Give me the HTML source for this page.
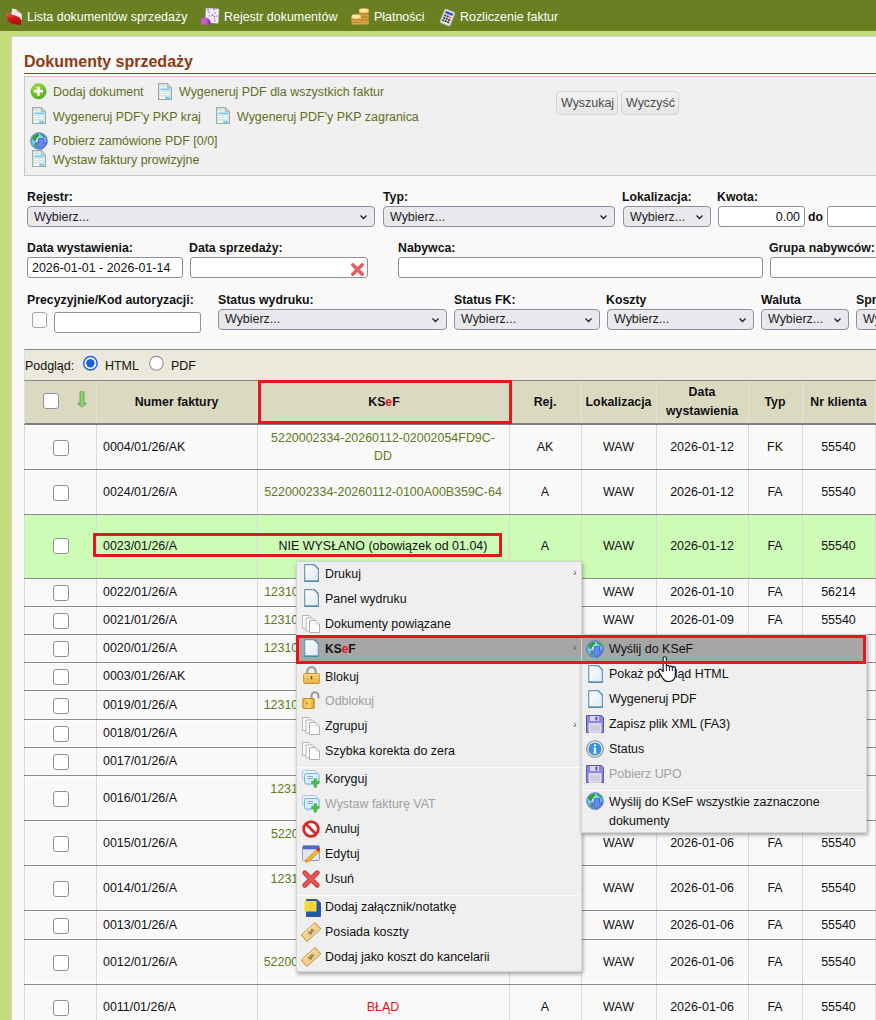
<!DOCTYPE html>
<html><head><meta charset="utf-8">
<style>
*{box-sizing:border-box;margin:0;padding:0}
html,body{width:876px;height:1020px;overflow:hidden;background:#c5dd79;font-family:"Liberation Sans",sans-serif;font-size:12.45px;color:#111}
.a{position:absolute;white-space:nowrap}
#nav{position:absolute;left:0;top:0;width:876px;height:31px;background:#6a7f22}
#nav .t{position:absolute;top:9px;color:#fff;font-size:12.45px;line-height:16px}
#panel{position:absolute;left:11px;top:36px;width:900px;height:1000px;background:#f9f9f9;border-top:1px solid #d4d2e2;border-left:1px solid #d0d0e0}
#title{position:absolute;left:24px;top:52px;font-size:16px;font-weight:bold;color:#8e3a14;line-height:20px}
#tline{position:absolute;left:24px;top:72px;width:860px;height:3px;background:#9a4020;border-top:1px solid #fff;border-bottom:1px solid #fff}
#tool{position:absolute;left:24px;top:76px;width:870px;height:100px;background:#f0f0f0;border:1px solid #c9c9c9}
.lnk{color:#5f6f1d}
.lbl{position:absolute;font-weight:bold;font-size:12.3px;line-height:14px;color:#111;white-space:nowrap}
.sel{position:absolute;height:21px;background:#e9e9ed;border:1px solid #8f8f9d;border-radius:4px;font-size:12.45px;line-height:20px;padding-left:6px;color:#1b1b1b;white-space:nowrap}
.sel .chev{position:absolute;right:7px;top:8px;width:7px;height:5px}
.inp{position:absolute;height:21px;background:#fff;border:1px solid #8f8f9d;border-radius:3px;font-size:12.45px;line-height:20px;padding-left:4px;color:#111;white-space:nowrap}
.btn{position:absolute;height:24px;background:linear-gradient(#f2f2f2,#e6e6e6);border:1px solid #d4d4d4;border-radius:4px;font-size:12.45px;line-height:22px;padding:0 0 0 4px;color:#4a4a4a}
#pod{position:absolute;left:24px;top:349px;width:860px;height:32px;background:#ebe9db;border-top:1px solid #8a8a88;border-left:1px solid #dcdcd4;border-bottom:1px solid #f4f2e6}
#thead{position:absolute;left:24px;top:380px;width:860px;height:45px;background:#dcd9c1;border-top:1px solid #8a8a88;border-bottom:2px solid #7e7e7e;border-left:1px solid #e4e4dc}
.th{position:absolute;font-weight:bold;font-size:12.35px;line-height:19px;text-align:center;color:#111}
.row{position:absolute;left:24px;width:860px;background:#f9f9f9;border-bottom:2px solid #979797}
.vl{position:absolute;width:1px;background:#dadada}
.td{position:absolute;text-align:center;font-size:12.45px;line-height:18px;color:#111;white-space:nowrap}
.ks{color:#5f7a1c}
.cb{position:absolute;width:16px;height:16px;background:#fff;border:1px solid #8f8f9d;border-radius:3px}
#menu{position:absolute;left:296px;top:561px;width:286px;height:410px;background:#efefef;border:1px solid #cfcfcf;box-shadow:2px 3px 5px rgba(0,0,0,.35)}
#sub{position:absolute;left:581px;top:634px;width:286px;height:199px;background:#efefef;border:1px solid #cfcfcf;box-shadow:2px 3px 5px rgba(0,0,0,.35)}
.mi{position:absolute;left:0;font-size:12.45px;line-height:16px;color:#111;white-space:nowrap}
.dis{color:#a0a0a0}
.sep{position:absolute;left:2px;right:2px;height:1px;background:#d6d6d6;border-bottom:1px solid #fafafa}
.red{position:absolute;border:3px solid #e8141e}
svg{position:absolute;overflow:visible}
</style></head><body>
<div id="nav">
 <div class="t" style="left:27px">Lista dokumentów sprzedaży</div>
 <div class="t" style="left:224px">Rejestr dokumentów</div>
 <div class="t" style="left:374px">Płatności</div>
 <div class="t" style="left:460px">Rozliczenie faktur</div>
</div>
<div id="panel"></div>
<div id="title">Dokumenty sprzedaży</div>
<div id="tline"></div>
<div id="tool"></div>
<div class="a lnk" style="left:53px;top:85px">Dodaj dokument</div>
<div class="a lnk" style="left:179px;top:85px">Wygeneruj PDF dla wszystkich faktur</div>
<div class="a lnk" style="left:53px;top:110px">Wygeneruj PDF'y PKP kraj</div>
<div class="a lnk" style="left:237px;top:110px">Wygeneruj PDF'y PKP zagranica</div>
<div class="a lnk" style="left:53px;top:134px">Pobierz zamówione PDF [0/0]</div>
<div class="a lnk" style="left:53px;top:153px">Wystaw faktury prowizyjne</div>
<div class="btn" style="left:556px;top:91px;width:62px">Wyszukaj</div>
<div class="btn" style="left:621px;top:91px;width:58px">Wyczyść</div>

<!-- filters -->
<div class="lbl" style="left:27px;top:190px">Rejestr:</div>
<div class="sel" style="left:27px;top:206px;width:348px">Wybierz...<svg class="chev" viewBox="0 0 7 5"><path d="M0.5 0.5L3.5 3.5L6.5 0.5" fill="none" stroke="#222" stroke-width="1.3"/></svg></div>
<div class="lbl" style="left:383px;top:190px">Typ:</div>
<div class="sel" style="left:383px;top:206px;width:232px">Wybierz...<svg class="chev" viewBox="0 0 7 5"><path d="M0.5 0.5L3.5 3.5L6.5 0.5" fill="none" stroke="#222" stroke-width="1.3"/></svg></div>
<div class="lbl" style="left:622px;top:190px">Lokalizacja:</div>
<div class="sel" style="left:623px;top:206px;width:88px">Wybierz...<svg class="chev" viewBox="0 0 7 5"><path d="M0.5 0.5L3.5 3.5L6.5 0.5" fill="none" stroke="#222" stroke-width="1.3"/></svg></div>
<div class="lbl" style="left:717px;top:190px">Kwota:</div>
<div class="inp" style="left:718px;top:206px;width:87px;text-align:right;padding-right:4px">0.00</div>
<div class="lbl" style="left:808px;top:210px">do</div>
<div class="inp" style="left:827px;top:206px;width:80px"></div>

<div class="lbl" style="left:27px;top:241px">Data wystawienia:</div>
<div class="inp" style="left:27px;top:257px;width:156px">2026-01-01 - 2026-01-14</div>
<div class="lbl" style="left:189px;top:241px">Data sprzedaży:</div>
<div class="inp" style="left:190px;top:257px;width:178px"></div>
<div class="lbl" style="left:398px;top:241px">Nabywca:</div>
<div class="inp" style="left:398px;top:257px;width:365px"></div>
<div class="lbl" style="left:769px;top:241px">Grupa nabywców:</div>
<div class="inp" style="left:770px;top:257px;width:120px"></div>

<div class="lbl" style="left:27px;top:293px">Precyzyjnie/Kod autoryzacji:</div>
<div class="cb" style="left:32px;top:312px;width:15px;height:16px;border-radius:3px;border-color:#a4a4b0"></div>
<div class="inp" style="left:54px;top:312px;width:147px"></div>
<div class="lbl" style="left:218px;top:293px">Status wydruku:</div>
<div class="sel" style="left:218px;top:309px;width:229px;line-height:19px">Wybierz...<svg class="chev" viewBox="0 0 7 5"><path d="M0.5 0.5L3.5 3.5L6.5 0.5" fill="none" stroke="#222" stroke-width="1.3"/></svg></div>
<div class="lbl" style="left:454px;top:293px">Status FK:</div>
<div class="sel" style="left:454px;top:309px;width:146px;line-height:19px">Wybierz...<svg class="chev" viewBox="0 0 7 5"><path d="M0.5 0.5L3.5 3.5L6.5 0.5" fill="none" stroke="#222" stroke-width="1.3"/></svg></div>
<div class="lbl" style="left:606px;top:293px">Koszty</div>
<div class="sel" style="left:607px;top:309px;width:147px;line-height:19px">Wybierz...<svg class="chev" viewBox="0 0 7 5"><path d="M0.5 0.5L3.5 3.5L6.5 0.5" fill="none" stroke="#222" stroke-width="1.3"/></svg></div>
<div class="lbl" style="left:761px;top:293px">Waluta</div>
<div class="sel" style="left:761px;top:309px;width:88px;line-height:19px">Wybierz...<svg class="chev" viewBox="0 0 7 5"><path d="M0.5 0.5L3.5 3.5L6.5 0.5" fill="none" stroke="#222" stroke-width="1.3"/></svg></div>
<div class="lbl" style="left:856px;top:293px">Spr</div>
<div class="sel" style="left:856px;top:309px;width:60px;line-height:19px">Wy</div>

<svg style="left:6px;top:8px" width="17" height="18" viewBox="0 0 17 18"><path d="M6.2 0.5L10 1.2L15.8 6L16 13.5L9 10L5.2 6Z" fill="#ece6e8"/><path d="M10 2.5L14 5.5" stroke="#d8a8b0" stroke-width="0.8"/><defs><linearGradient id="fd" x1="0" y1="0" x2="0.3" y2="1"><stop offset="0" stop-color="#f06868"/><stop offset="0.5" stop-color="#d01818"/><stop offset="1" stop-color="#b01010"/></linearGradient></defs><path d="M0.1 4.8L9 7.6L12.8 9L15.9 12.4L14.2 17.2L4.5 15.2L1.5 12.5Z" fill="url(#fd)"/></svg>
<svg style="left:201px;top:7px" width="18" height="18" viewBox="0 0 18 18"><path d="M5 1L18 2L17.2 16.3L4.2 15.5Z" fill="#f0f0f6" stroke="#d0c8e0" stroke-width="0.4"/><g fill="#c050d0"><circle cx="7" cy="2.5" r="0.9"/><circle cx="13" cy="2.5" r="0.8"/><circle cx="8" cy="5" r="0.8"/><circle cx="14" cy="6" r="0.8"/><circle cx="11.5" cy="8" r="0.9"/><circle cx="8.5" cy="9" r="0.8"/><circle cx="13.5" cy="9.5" r="0.8"/><circle cx="16" cy="9" r="0.7"/><circle cx="13.5" cy="12" r="0.8"/><circle cx="14" cy="14" r="0.7"/></g><path d="M0 12.5L3.5 10L7.5 11.5L9.5 14V17.5H0Z" fill="#c85acc"/><path d="M6.5 11.5L9.5 14V17.5H6.5Z" fill="#9a38a8"/></svg>
<svg style="left:351px;top:8px" width="18" height="17" viewBox="0 0 18 17"><rect x="8" y="0.5" width="9.8" height="16" rx="1.5" fill="#d8a040"/><ellipse cx="12.9" cy="2.5" rx="4.8" ry="2" fill="#fbe6a0"/><path d="M8.2 6H17.7M8.2 9H17.7M8.2 12H17.7" stroke="#a87020" stroke-width="0.8"/><rect x="0.5" y="6.5" width="9.5" height="10" rx="1.5" fill="#e0aa48"/><ellipse cx="5.2" cy="8.5" rx="4.6" ry="2" fill="#fbe6a0"/><path d="M0.7 12H9.8M0.7 14.5H9.8" stroke="#a87020" stroke-width="0.8"/></svg>
<svg style="left:439px;top:9px" width="17" height="17" viewBox="0 0 17 17"><g transform="rotate(22 8.5 8.5)"><rect x="3.2" y="1.2" width="10.6" height="14.6" rx="1.2" fill="#e6e6e6" stroke="#bdbdbd" stroke-width="0.8"/><rect x="4.6" y="2.8" width="7.8" height="2.6" fill="#3a5eb8"/><g fill="#3c3c3c"><rect x="4.6" y="6.6" width="2" height="1.8"/><rect x="7.3" y="6.6" width="2" height="1.8"/><rect x="4.6" y="9.2" width="2" height="1.8"/><rect x="7.3" y="9.2" width="2" height="1.8"/><rect x="10" y="9.2" width="2" height="1.8"/><rect x="4.6" y="11.8" width="2" height="1.8"/><rect x="7.3" y="11.8" width="2" height="1.8"/><rect x="10" y="11.8" width="2" height="1.8"/></g><rect x="10" y="6.6" width="2.2" height="1.8" fill="#f07a7a"/></g></svg>
<svg style="left:30px;top:83px" width="17" height="17" viewBox="0 0 17 17"><defs><radialGradient id="gp" cx="0.4" cy="0.3" r="0.75"><stop offset="0" stop-color="#a8e050"/><stop offset="1" stop-color="#4aa820"/></radialGradient></defs><circle cx="8.5" cy="8.3" r="8" fill="url(#gp)"/><path d="M8.5 3.8V12.8M4 8.3H13" stroke="#fff" stroke-width="2.4"/></svg>
<svg style="left:158px;top:83px" width="14" height="17" viewBox="0 0 14 17"><path d="M0.6 0.6H9.3L13.4 4.7V16.4H0.6Z" fill="#e9f0f0" stroke="#9aabab" stroke-width="1.2"/><path d="M9.3 0.6V4.7H13.4" fill="#c9d5d5" stroke="#9aabab" stroke-width="0.8"/><path d="M3 3.2H7" stroke="#b8c8c8" stroke-width="0.7"/><rect x="2.5" y="5.6" width="9.5" height="1.6" fill="#6ccbf2"/><rect x="2.8" y="7.6" width="4" height="6" fill="#d8e4e4"/><rect x="7.3" y="7.6" width="4.4" height="6" fill="#d8e4e4"/><path d="M3.3 9.5H6.3M7.8 9.5H11M3.3 11.5H6.3M7.8 11.5H11" stroke="#fff" stroke-width="0.9"/><rect x="2" y="14" width="5" height="1.8" fill="#fff"/><rect x="7.3" y="13.8" width="4.6" height="2" fill="#6ccbf2"/></svg>
<svg style="left:32px;top:107px" width="14" height="17" viewBox="0 0 14 17"><path d="M0.6 0.6H9.3L13.4 4.7V16.4H0.6Z" fill="#e9f0f0" stroke="#9aabab" stroke-width="1.2"/><path d="M9.3 0.6V4.7H13.4" fill="#c9d5d5" stroke="#9aabab" stroke-width="0.8"/><path d="M3 3.2H7" stroke="#b8c8c8" stroke-width="0.7"/><rect x="2.5" y="5.6" width="9.5" height="1.6" fill="#6ccbf2"/><rect x="2.8" y="7.6" width="4" height="6" fill="#d8e4e4"/><rect x="7.3" y="7.6" width="4.4" height="6" fill="#d8e4e4"/><path d="M3.3 9.5H6.3M7.8 9.5H11M3.3 11.5H6.3M7.8 11.5H11" stroke="#fff" stroke-width="0.9"/><rect x="2" y="14" width="5" height="1.8" fill="#fff"/><rect x="7.3" y="13.8" width="4.6" height="2" fill="#6ccbf2"/></svg>
<svg style="left:216px;top:107px" width="14" height="17" viewBox="0 0 14 17"><path d="M0.6 0.6H9.3L13.4 4.7V16.4H0.6Z" fill="#e9f0f0" stroke="#9aabab" stroke-width="1.2"/><path d="M9.3 0.6V4.7H13.4" fill="#c9d5d5" stroke="#9aabab" stroke-width="0.8"/><path d="M3 3.2H7" stroke="#b8c8c8" stroke-width="0.7"/><rect x="2.5" y="5.6" width="9.5" height="1.6" fill="#6ccbf2"/><rect x="2.8" y="7.6" width="4" height="6" fill="#d8e4e4"/><rect x="7.3" y="7.6" width="4.4" height="6" fill="#d8e4e4"/><path d="M3.3 9.5H6.3M7.8 9.5H11M3.3 11.5H6.3M7.8 11.5H11" stroke="#fff" stroke-width="0.9"/><rect x="2" y="14" width="5" height="1.8" fill="#fff"/><rect x="7.3" y="13.8" width="4.6" height="2" fill="#6ccbf2"/></svg>
<svg style="left:30px;top:132px" width="18" height="18" viewBox="0 0 18 18"><defs><radialGradient id="gl" cx="0.4" cy="0.35" r="0.7"><stop offset="0" stop-color="#b8ecfb"/><stop offset="1" stop-color="#3a9ae0"/></radialGradient></defs><circle cx="9" cy="9" r="8.3" fill="url(#gl)" stroke="#5a68c8" stroke-width="0.9"/><path d="M2 6Q4 2 8.5 1.5Q10 3 8 5Q6 7 5 9.5Q3 9 2 6Z" fill="#2ea03a"/><path d="M9.5 1.5Q13 1.6 16 5Q15 6 13.5 5Q12 4 9.5 1.5Z" fill="#2ea03a"/><path d="M4 12Q6 12 7 14Q7.5 16.5 6 16Q4 14.5 4 12Z" fill="#3aa83a"/><path d="M8.5 6.5H13.5V11H17L11 17.5L5 11H8.5Z" fill="#6a88ec" stroke="#3e5cc8" stroke-width="0.8"/></svg>
<svg style="left:32px;top:150px" width="14" height="17" viewBox="0 0 14 17"><path d="M0.6 0.6H9.3L13.4 4.7V16.4H0.6Z" fill="#e9f0f0" stroke="#9aabab" stroke-width="1.2"/><path d="M9.3 0.6V4.7H13.4" fill="#c9d5d5" stroke="#9aabab" stroke-width="0.8"/><path d="M3 3.2H7" stroke="#b8c8c8" stroke-width="0.7"/><rect x="2.5" y="5.6" width="9.5" height="1.6" fill="#6ccbf2"/><rect x="2.8" y="7.6" width="4" height="6" fill="#d8e4e4"/><rect x="7.3" y="7.6" width="4.4" height="6" fill="#d8e4e4"/><path d="M3.3 9.5H6.3M7.8 9.5H11M3.3 11.5H6.3M7.8 11.5H11" stroke="#fff" stroke-width="0.9"/><rect x="2" y="14" width="5" height="1.8" fill="#fff"/><rect x="7.3" y="13.8" width="4.6" height="2" fill="#6ccbf2"/></svg>
<svg style="left:350px;top:262px" width="15" height="15" viewBox="0 0 15 15"><path d="M2.8 2.8L12.2 12.2M12.2 2.8L2.8 12.2" stroke="#e06060" stroke-width="3.6" stroke-linecap="round"/></svg>
<!-- preview bar -->
<div id="pod"></div>
<div class="a" style="left:25px;top:359px">Podgląd:</div>
<div class="a" style="left:105px;top:359px">HTML</div>
<div class="a" style="left:171px;top:359px">PDF</div>
<svg style="left:82px;top:355px" width="17" height="17" viewBox="0 0 17 17"><circle cx="8.4" cy="8.3" r="6.7" fill="#fff" stroke="#1b5fe0" stroke-width="1.5"/><circle cx="8.4" cy="8.3" r="4.2" fill="#1b5fe0"/></svg>
<svg style="left:148px;top:355px" width="17" height="17" viewBox="0 0 17 17"><circle cx="8.4" cy="8.3" r="6.9" fill="#fff" stroke="#8f8f9d" stroke-width="1.1"/></svg>

<!-- table header -->
<div id="thead"></div>
<div class="cb" style="left:43px;top:393px"></div>
<svg style="left:77px;top:391px" width="10" height="18" viewBox="0 0 10 18"><defs><linearGradient id="ga" x1="0" y1="0" x2="1" y2="0"><stop offset="0" stop-color="#4e9a3a"/><stop offset="0.5" stop-color="#9ad27a"/><stop offset="1" stop-color="#4e9a3a"/></linearGradient></defs><path d="M2.8 0.5H7.2V12.2H9.6L5 16.6L0.4 12.2H2.8Z" fill="url(#ga)" stroke="#5a9a48" stroke-width="0.5"/></svg>
<div class="vl" style="left:96px;top:381px;height:42px;background:#e6e4d4"></div>
<div class="vl" style="left:257px;top:381px;height:42px;background:#e6e4d4"></div>
<div class="vl" style="left:509px;top:381px;height:42px;background:#e6e4d4"></div>
<div class="vl" style="left:581px;top:381px;height:42px;background:#e6e4d4"></div>
<div class="vl" style="left:656px;top:381px;height:42px;background:#e6e4d4"></div>
<div class="vl" style="left:748px;top:381px;height:42px;background:#e6e4d4"></div>
<div class="vl" style="left:802px;top:381px;height:42px;background:#e6e4d4"></div>
<div class="vl" style="left:875px;top:381px;height:42px;background:#e6e4d4"></div>
<div class="th" style="left:116.5px;width:120px;top:393px">Numer faktury</div>
<div class="th" style="left:323.0px;width:120px;top:393px;left:324.0px">K<span>S</span><span style="color:#e8141e">e</span>F</div>
<div class="th" style="left:485.0px;width:120px;top:393px">Rej.</div>
<div class="th" style="left:558.5px;width:120px;top:393px">Lokalizacja</div>
<div class="th" style="left:642.0px;width:120px;top:383px">Data<br>wystawienia</div>
<div class="th" style="left:715.0px;width:120px;top:393px">Typ</div>
<div class="th" style="left:778.5px;width:120px;top:393px">Nr klienta</div>
<div class="red" style="left:258px;top:380px;width:254px;height:44px"></div>

<!-- rows -->
<div class="a" style="left:24px;top:425px;width:852px;height:44px;background:#f9f9f9;border-top:1px solid #fff;border-bottom:1px solid #fff;"></div>
<div class="a" style="left:24px;top:469px;width:852px;height:1px;background:#888"></div>
<div class="vl" style="left:24px;top:425px;height:44px"></div>
<div class="vl" style="left:96px;top:425px;height:44px"></div>
<div class="vl" style="left:257px;top:425px;height:44px"></div>
<div class="vl" style="left:509px;top:425px;height:44px"></div>
<div class="vl" style="left:581px;top:425px;height:44px"></div>
<div class="vl" style="left:656px;top:425px;height:44px"></div>
<div class="vl" style="left:748px;top:425px;height:44px"></div>
<div class="vl" style="left:802px;top:425px;height:44px"></div>
<div class="vl" style="left:875px;top:425px;height:44px"></div>
<div class="cb" style="left:53px;top:440px"></div>
<div class="td" style="left:103px;top:438px;text-align:left">0004/01/26/AK</div>
<div class="td ks" style="left:253.0px;width:260px;top:429px">5220002334-20260112-02002054FD9C-<br>DD</div>
<div class="td" style="left:495.0px;width:100px;top:438px">AK</div>
<div class="td" style="left:568.5px;width:100px;top:438px">WAW</div>
<div class="td" style="left:652.0px;width:100px;top:438px">2026-01-12</div>
<div class="td" style="left:725.0px;width:100px;top:438px">FK</div>
<div class="td" style="left:788.5px;width:100px;top:438px">55540</div>
<div class="a" style="left:24px;top:470px;width:852px;height:44px;background:#f9f9f9;border-top:1px solid #fff;border-bottom:1px solid #fff;"></div>
<div class="a" style="left:24px;top:514px;width:852px;height:1px;background:#888"></div>
<div class="vl" style="left:24px;top:470px;height:44px"></div>
<div class="vl" style="left:96px;top:470px;height:44px"></div>
<div class="vl" style="left:257px;top:470px;height:44px"></div>
<div class="vl" style="left:509px;top:470px;height:44px"></div>
<div class="vl" style="left:581px;top:470px;height:44px"></div>
<div class="vl" style="left:656px;top:470px;height:44px"></div>
<div class="vl" style="left:748px;top:470px;height:44px"></div>
<div class="vl" style="left:802px;top:470px;height:44px"></div>
<div class="vl" style="left:875px;top:470px;height:44px"></div>
<div class="cb" style="left:53px;top:485px"></div>
<div class="td" style="left:103px;top:483px;text-align:left">0024/01/26/A</div>
<div class="td ks" style="left:253.0px;width:260px;top:483px">5220002334-20260112-0100A00B359C-64</div>
<div class="td" style="left:495.0px;width:100px;top:483px">A</div>
<div class="td" style="left:568.5px;width:100px;top:483px">WAW</div>
<div class="td" style="left:652.0px;width:100px;top:483px">2026-01-12</div>
<div class="td" style="left:725.0px;width:100px;top:483px">FA</div>
<div class="td" style="left:788.5px;width:100px;top:483px">55540</div>
<div class="a" style="left:24px;top:515px;width:852px;height:63px;background:#cdfcb6;"></div>
<div class="a" style="left:24px;top:578px;width:852px;height:1px;background:#888"></div>
<div class="vl" style="left:24px;top:515px;height:63px"></div>
<div class="vl" style="left:96px;top:515px;height:63px"></div>
<div class="vl" style="left:257px;top:515px;height:63px"></div>
<div class="vl" style="left:509px;top:515px;height:63px"></div>
<div class="vl" style="left:581px;top:515px;height:63px"></div>
<div class="vl" style="left:656px;top:515px;height:63px"></div>
<div class="vl" style="left:748px;top:515px;height:63px"></div>
<div class="vl" style="left:802px;top:515px;height:63px"></div>
<div class="vl" style="left:875px;top:515px;height:63px"></div>
<div class="cb" style="left:53px;top:538px"></div>
<div class="td" style="left:103px;top:536.5px;text-align:left">0023/01/26/A</div>
<div class="td ks" style="left:253.0px;width:260px;top:536.5px"><span style="color:#111">NIE WYSŁANO (obowiązek od 01.04)</span></div>
<div class="td" style="left:495.0px;width:100px;top:536.5px">A</div>
<div class="td" style="left:568.5px;width:100px;top:536.5px">WAW</div>
<div class="td" style="left:652.0px;width:100px;top:536.5px">2026-01-12</div>
<div class="td" style="left:725.0px;width:100px;top:536.5px">FA</div>
<div class="td" style="left:788.5px;width:100px;top:536.5px">55540</div>
<div class="a" style="left:24px;top:579px;width:852px;height:27px;background:#f9f9f9;border-top:1px solid #fff;border-bottom:1px solid #fff;"></div>
<div class="a" style="left:24px;top:606px;width:852px;height:1px;background:#888"></div>
<div class="vl" style="left:24px;top:579px;height:27px"></div>
<div class="vl" style="left:96px;top:579px;height:27px"></div>
<div class="vl" style="left:257px;top:579px;height:27px"></div>
<div class="vl" style="left:509px;top:579px;height:27px"></div>
<div class="vl" style="left:581px;top:579px;height:27px"></div>
<div class="vl" style="left:656px;top:579px;height:27px"></div>
<div class="vl" style="left:748px;top:579px;height:27px"></div>
<div class="vl" style="left:802px;top:579px;height:27px"></div>
<div class="vl" style="left:875px;top:579px;height:27px"></div>
<div class="cb" style="left:53px;top:585px"></div>
<div class="td" style="left:103px;top:583px;text-align:left">0022/01/26/A</div>
<div class="td ks" style="left:253.0px;width:260px;top:583px">1231002334-20260110-0100A00B359C-64</div>
<div class="td" style="left:495.0px;width:100px;top:583px">A</div>
<div class="td" style="left:568.5px;width:100px;top:583px">WAW</div>
<div class="td" style="left:652.0px;width:100px;top:583px">2026-01-10</div>
<div class="td" style="left:725.0px;width:100px;top:583px">FA</div>
<div class="td" style="left:788.5px;width:100px;top:583px">56214</div>
<div class="a" style="left:24px;top:607px;width:852px;height:27px;background:#f9f9f9;border-top:1px solid #fff;border-bottom:1px solid #fff;"></div>
<div class="a" style="left:24px;top:634px;width:852px;height:1px;background:#888"></div>
<div class="vl" style="left:24px;top:607px;height:27px"></div>
<div class="vl" style="left:96px;top:607px;height:27px"></div>
<div class="vl" style="left:257px;top:607px;height:27px"></div>
<div class="vl" style="left:509px;top:607px;height:27px"></div>
<div class="vl" style="left:581px;top:607px;height:27px"></div>
<div class="vl" style="left:656px;top:607px;height:27px"></div>
<div class="vl" style="left:748px;top:607px;height:27px"></div>
<div class="vl" style="left:802px;top:607px;height:27px"></div>
<div class="vl" style="left:875px;top:607px;height:27px"></div>
<div class="cb" style="left:53px;top:613px"></div>
<div class="td" style="left:103px;top:611px;text-align:left">0021/01/26/A</div>
<div class="td ks" style="left:253.0px;width:260px;top:611px">1231002334-20260109-0100A00B359C-64</div>
<div class="td" style="left:495.0px;width:100px;top:611px">A</div>
<div class="td" style="left:568.5px;width:100px;top:611px">WAW</div>
<div class="td" style="left:652.0px;width:100px;top:611px">2026-01-09</div>
<div class="td" style="left:725.0px;width:100px;top:611px">FA</div>
<div class="td" style="left:788.5px;width:100px;top:611px">55540</div>
<div class="a" style="left:24px;top:635px;width:852px;height:27px;background:#f9f9f9;border-top:1px solid #fff;border-bottom:1px solid #fff;"></div>
<div class="a" style="left:24px;top:662px;width:852px;height:1px;background:#888"></div>
<div class="vl" style="left:24px;top:635px;height:27px"></div>
<div class="vl" style="left:96px;top:635px;height:27px"></div>
<div class="vl" style="left:257px;top:635px;height:27px"></div>
<div class="vl" style="left:509px;top:635px;height:27px"></div>
<div class="vl" style="left:581px;top:635px;height:27px"></div>
<div class="vl" style="left:656px;top:635px;height:27px"></div>
<div class="vl" style="left:748px;top:635px;height:27px"></div>
<div class="vl" style="left:802px;top:635px;height:27px"></div>
<div class="vl" style="left:875px;top:635px;height:27px"></div>
<div class="cb" style="left:53px;top:641px"></div>
<div class="td" style="left:103px;top:639px;text-align:left">0020/01/26/A</div>
<div class="td ks" style="left:253.0px;width:260px;top:639px">1231002334-20260109-0100A00B359C-64</div>
<div class="td" style="left:495.0px;width:100px;top:639px">A</div>
<div class="td" style="left:568.5px;width:100px;top:639px">WAW</div>
<div class="td" style="left:652.0px;width:100px;top:639px">2026-01-09</div>
<div class="td" style="left:725.0px;width:100px;top:639px">FA</div>
<div class="td" style="left:788.5px;width:100px;top:639px">55540</div>
<div class="a" style="left:24px;top:663px;width:852px;height:27px;background:#f9f9f9;border-top:1px solid #fff;border-bottom:1px solid #fff;"></div>
<div class="a" style="left:24px;top:690px;width:852px;height:1px;background:#888"></div>
<div class="vl" style="left:24px;top:663px;height:27px"></div>
<div class="vl" style="left:96px;top:663px;height:27px"></div>
<div class="vl" style="left:257px;top:663px;height:27px"></div>
<div class="vl" style="left:509px;top:663px;height:27px"></div>
<div class="vl" style="left:581px;top:663px;height:27px"></div>
<div class="vl" style="left:656px;top:663px;height:27px"></div>
<div class="vl" style="left:748px;top:663px;height:27px"></div>
<div class="vl" style="left:802px;top:663px;height:27px"></div>
<div class="vl" style="left:875px;top:663px;height:27px"></div>
<div class="cb" style="left:53px;top:669px"></div>
<div class="td" style="left:103px;top:667px;text-align:left">0003/01/26/AK</div>
<div class="td ks" style="left:253.0px;width:260px;top:667px"></div>
<div class="td" style="left:495.0px;width:100px;top:667px">AK</div>
<div class="td" style="left:568.5px;width:100px;top:667px">WAW</div>
<div class="td" style="left:652.0px;width:100px;top:667px">2026-01-08</div>
<div class="td" style="left:725.0px;width:100px;top:667px">FK</div>
<div class="td" style="left:788.5px;width:100px;top:667px">55540</div>
<div class="a" style="left:24px;top:691px;width:852px;height:28px;background:#f9f9f9;border-top:1px solid #fff;border-bottom:1px solid #fff;"></div>
<div class="a" style="left:24px;top:719px;width:852px;height:1px;background:#888"></div>
<div class="vl" style="left:24px;top:691px;height:28px"></div>
<div class="vl" style="left:96px;top:691px;height:28px"></div>
<div class="vl" style="left:257px;top:691px;height:28px"></div>
<div class="vl" style="left:509px;top:691px;height:28px"></div>
<div class="vl" style="left:581px;top:691px;height:28px"></div>
<div class="vl" style="left:656px;top:691px;height:28px"></div>
<div class="vl" style="left:748px;top:691px;height:28px"></div>
<div class="vl" style="left:802px;top:691px;height:28px"></div>
<div class="vl" style="left:875px;top:691px;height:28px"></div>
<div class="cb" style="left:53px;top:698px"></div>
<div class="td" style="left:103px;top:696px;text-align:left">0019/01/26/A</div>
<div class="td ks" style="left:253.0px;width:260px;top:696px">1231002334-20260108-0100A00B359C-64</div>
<div class="td" style="left:495.0px;width:100px;top:696px">A</div>
<div class="td" style="left:568.5px;width:100px;top:696px">WAW</div>
<div class="td" style="left:652.0px;width:100px;top:696px">2026-01-08</div>
<div class="td" style="left:725.0px;width:100px;top:696px">FA</div>
<div class="td" style="left:788.5px;width:100px;top:696px">55540</div>
<div class="a" style="left:24px;top:720px;width:852px;height:27px;background:#f9f9f9;border-top:1px solid #fff;border-bottom:1px solid #fff;"></div>
<div class="a" style="left:24px;top:747px;width:852px;height:1px;background:#888"></div>
<div class="vl" style="left:24px;top:720px;height:27px"></div>
<div class="vl" style="left:96px;top:720px;height:27px"></div>
<div class="vl" style="left:257px;top:720px;height:27px"></div>
<div class="vl" style="left:509px;top:720px;height:27px"></div>
<div class="vl" style="left:581px;top:720px;height:27px"></div>
<div class="vl" style="left:656px;top:720px;height:27px"></div>
<div class="vl" style="left:748px;top:720px;height:27px"></div>
<div class="vl" style="left:802px;top:720px;height:27px"></div>
<div class="vl" style="left:875px;top:720px;height:27px"></div>
<div class="cb" style="left:53px;top:726px"></div>
<div class="td" style="left:103px;top:724px;text-align:left">0018/01/26/A</div>
<div class="td ks" style="left:253.0px;width:260px;top:724px"></div>
<div class="td" style="left:495.0px;width:100px;top:724px">A</div>
<div class="td" style="left:568.5px;width:100px;top:724px">WAW</div>
<div class="td" style="left:652.0px;width:100px;top:724px">2026-01-08</div>
<div class="td" style="left:725.0px;width:100px;top:724px">FA</div>
<div class="td" style="left:788.5px;width:100px;top:724px">55540</div>
<div class="a" style="left:24px;top:748px;width:852px;height:27px;background:#f9f9f9;border-top:1px solid #fff;border-bottom:1px solid #fff;"></div>
<div class="a" style="left:24px;top:775px;width:852px;height:1px;background:#888"></div>
<div class="vl" style="left:24px;top:748px;height:27px"></div>
<div class="vl" style="left:96px;top:748px;height:27px"></div>
<div class="vl" style="left:257px;top:748px;height:27px"></div>
<div class="vl" style="left:509px;top:748px;height:27px"></div>
<div class="vl" style="left:581px;top:748px;height:27px"></div>
<div class="vl" style="left:656px;top:748px;height:27px"></div>
<div class="vl" style="left:748px;top:748px;height:27px"></div>
<div class="vl" style="left:802px;top:748px;height:27px"></div>
<div class="vl" style="left:875px;top:748px;height:27px"></div>
<div class="cb" style="left:53px;top:754px"></div>
<div class="td" style="left:103px;top:752px;text-align:left">0017/01/26/A</div>
<div class="td ks" style="left:253.0px;width:260px;top:752px"></div>
<div class="td" style="left:495.0px;width:100px;top:752px">A</div>
<div class="td" style="left:568.5px;width:100px;top:752px">WAW</div>
<div class="td" style="left:652.0px;width:100px;top:752px">2026-01-07</div>
<div class="td" style="left:725.0px;width:100px;top:752px">FA</div>
<div class="td" style="left:788.5px;width:100px;top:752px">55540</div>
<div class="a" style="left:24px;top:776px;width:852px;height:44px;background:#f9f9f9;border-top:1px solid #fff;border-bottom:1px solid #fff;"></div>
<div class="a" style="left:24px;top:820px;width:852px;height:1px;background:#888"></div>
<div class="vl" style="left:24px;top:776px;height:44px"></div>
<div class="vl" style="left:96px;top:776px;height:44px"></div>
<div class="vl" style="left:257px;top:776px;height:44px"></div>
<div class="vl" style="left:509px;top:776px;height:44px"></div>
<div class="vl" style="left:581px;top:776px;height:44px"></div>
<div class="vl" style="left:656px;top:776px;height:44px"></div>
<div class="vl" style="left:748px;top:776px;height:44px"></div>
<div class="vl" style="left:802px;top:776px;height:44px"></div>
<div class="vl" style="left:875px;top:776px;height:44px"></div>
<div class="cb" style="left:53px;top:791px"></div>
<div class="td" style="left:103px;top:789px;text-align:left">0016/01/26/A</div>
<div class="td ks" style="left:253.0px;width:260px;top:780px">1231002334-20260107-02002054AD1C-<br>7E</div>
<div class="td" style="left:495.0px;width:100px;top:789px">A</div>
<div class="td" style="left:568.5px;width:100px;top:789px">WAW</div>
<div class="td" style="left:652.0px;width:100px;top:789px">2026-01-07</div>
<div class="td" style="left:725.0px;width:100px;top:789px">FA</div>
<div class="td" style="left:788.5px;width:100px;top:789px">55540</div>
<div class="a" style="left:24px;top:821px;width:852px;height:44px;background:#f9f9f9;border-top:1px solid #fff;border-bottom:1px solid #fff;"></div>
<div class="a" style="left:24px;top:865px;width:852px;height:1px;background:#888"></div>
<div class="vl" style="left:24px;top:821px;height:44px"></div>
<div class="vl" style="left:96px;top:821px;height:44px"></div>
<div class="vl" style="left:257px;top:821px;height:44px"></div>
<div class="vl" style="left:509px;top:821px;height:44px"></div>
<div class="vl" style="left:581px;top:821px;height:44px"></div>
<div class="vl" style="left:656px;top:821px;height:44px"></div>
<div class="vl" style="left:748px;top:821px;height:44px"></div>
<div class="vl" style="left:802px;top:821px;height:44px"></div>
<div class="vl" style="left:875px;top:821px;height:44px"></div>
<div class="cb" style="left:53px;top:836px"></div>
<div class="td" style="left:103px;top:834px;text-align:left">0015/01/26/A</div>
<div class="td ks" style="left:253.0px;width:260px;top:825px">5220002334-20260106-02002054BC2F-<br>A1</div>
<div class="td" style="left:495.0px;width:100px;top:834px">A</div>
<div class="td" style="left:568.5px;width:100px;top:834px">WAW</div>
<div class="td" style="left:652.0px;width:100px;top:834px">2026-01-06</div>
<div class="td" style="left:725.0px;width:100px;top:834px">FA</div>
<div class="td" style="left:788.5px;width:100px;top:834px">55540</div>
<div class="a" style="left:24px;top:866px;width:852px;height:44px;background:#f9f9f9;border-top:1px solid #fff;border-bottom:1px solid #fff;"></div>
<div class="a" style="left:24px;top:910px;width:852px;height:1px;background:#888"></div>
<div class="vl" style="left:24px;top:866px;height:44px"></div>
<div class="vl" style="left:96px;top:866px;height:44px"></div>
<div class="vl" style="left:257px;top:866px;height:44px"></div>
<div class="vl" style="left:509px;top:866px;height:44px"></div>
<div class="vl" style="left:581px;top:866px;height:44px"></div>
<div class="vl" style="left:656px;top:866px;height:44px"></div>
<div class="vl" style="left:748px;top:866px;height:44px"></div>
<div class="vl" style="left:802px;top:866px;height:44px"></div>
<div class="vl" style="left:875px;top:866px;height:44px"></div>
<div class="cb" style="left:53px;top:881px"></div>
<div class="td" style="left:103px;top:879px;text-align:left">0014/01/26/A</div>
<div class="td ks" style="left:253.0px;width:260px;top:870px">1231002334-20260106-02002054CE3B-<br>5D</div>
<div class="td" style="left:495.0px;width:100px;top:879px">A</div>
<div class="td" style="left:568.5px;width:100px;top:879px">WAW</div>
<div class="td" style="left:652.0px;width:100px;top:879px">2026-01-06</div>
<div class="td" style="left:725.0px;width:100px;top:879px">FA</div>
<div class="td" style="left:788.5px;width:100px;top:879px">55540</div>
<div class="a" style="left:24px;top:911px;width:852px;height:28px;background:#f9f9f9;border-top:1px solid #fff;border-bottom:1px solid #fff;"></div>
<div class="a" style="left:24px;top:939px;width:852px;height:1px;background:#888"></div>
<div class="vl" style="left:24px;top:911px;height:28px"></div>
<div class="vl" style="left:96px;top:911px;height:28px"></div>
<div class="vl" style="left:257px;top:911px;height:28px"></div>
<div class="vl" style="left:509px;top:911px;height:28px"></div>
<div class="vl" style="left:581px;top:911px;height:28px"></div>
<div class="vl" style="left:656px;top:911px;height:28px"></div>
<div class="vl" style="left:748px;top:911px;height:28px"></div>
<div class="vl" style="left:802px;top:911px;height:28px"></div>
<div class="vl" style="left:875px;top:911px;height:28px"></div>
<div class="cb" style="left:53px;top:918px"></div>
<div class="td" style="left:103px;top:916px;text-align:left">0013/01/26/A</div>
<div class="td ks" style="left:253.0px;width:260px;top:916px"></div>
<div class="td" style="left:495.0px;width:100px;top:916px">A</div>
<div class="td" style="left:568.5px;width:100px;top:916px">WAW</div>
<div class="td" style="left:652.0px;width:100px;top:916px">2026-01-06</div>
<div class="td" style="left:725.0px;width:100px;top:916px">FA</div>
<div class="td" style="left:788.5px;width:100px;top:916px">55540</div>
<div class="a" style="left:24px;top:940px;width:852px;height:44px;background:#f9f9f9;border-top:1px solid #fff;border-bottom:1px solid #fff;"></div>
<div class="a" style="left:24px;top:984px;width:852px;height:1px;background:#888"></div>
<div class="vl" style="left:24px;top:940px;height:44px"></div>
<div class="vl" style="left:96px;top:940px;height:44px"></div>
<div class="vl" style="left:257px;top:940px;height:44px"></div>
<div class="vl" style="left:509px;top:940px;height:44px"></div>
<div class="vl" style="left:581px;top:940px;height:44px"></div>
<div class="vl" style="left:656px;top:940px;height:44px"></div>
<div class="vl" style="left:748px;top:940px;height:44px"></div>
<div class="vl" style="left:802px;top:940px;height:44px"></div>
<div class="vl" style="left:875px;top:940px;height:44px"></div>
<div class="cb" style="left:53px;top:955px"></div>
<div class="td" style="left:103px;top:953px;text-align:left">0012/01/26/A</div>
<div class="td ks" style="left:253.0px;width:260px;top:953px">5220002334-20260106-0100A00B359C-64</div>
<div class="td" style="left:495.0px;width:100px;top:953px">A</div>
<div class="td" style="left:568.5px;width:100px;top:953px">WAW</div>
<div class="td" style="left:652.0px;width:100px;top:953px">2026-01-06</div>
<div class="td" style="left:725.0px;width:100px;top:953px">FA</div>
<div class="td" style="left:788.5px;width:100px;top:953px">55540</div>
<div class="a" style="left:24px;top:985px;width:852px;height:44px;background:#f9f9f9;border-top:1px solid #fff;border-bottom:1px solid #fff;"></div>
<div class="a" style="left:24px;top:1029px;width:852px;height:1px;background:#888"></div>
<div class="vl" style="left:24px;top:985px;height:44px"></div>
<div class="vl" style="left:96px;top:985px;height:44px"></div>
<div class="vl" style="left:257px;top:985px;height:44px"></div>
<div class="vl" style="left:509px;top:985px;height:44px"></div>
<div class="vl" style="left:581px;top:985px;height:44px"></div>
<div class="vl" style="left:656px;top:985px;height:44px"></div>
<div class="vl" style="left:748px;top:985px;height:44px"></div>
<div class="vl" style="left:802px;top:985px;height:44px"></div>
<div class="vl" style="left:875px;top:985px;height:44px"></div>
<div class="cb" style="left:53px;top:1000px"></div>
<div class="td" style="left:103px;top:998px;text-align:left">0011/01/26/A</div>
<div class="td ks" style="left:253.0px;width:260px;top:998px"><span style="color:#e8141e">BŁĄD</span></div>
<div class="td" style="left:495.0px;width:100px;top:998px">A</div>
<div class="td" style="left:568.5px;width:100px;top:998px">WAW</div>
<div class="td" style="left:652.0px;width:100px;top:998px">2026-01-06</div>
<div class="td" style="left:725.0px;width:100px;top:998px">FA</div>
<div class="td" style="left:788.5px;width:100px;top:998px">55540</div>
<div class="red" style="left:93px;top:533px;width:409px;height:24px"></div>

<!-- menus -->
<div class="a" style="left:296px;top:561px;width:286px;height:411px;background:#efefef;border:1px solid #d4d4d4;box-shadow:1px 2px 4px rgba(0,0,0,.35)"></div>
<div class="a" style="left:581px;top:634px;width:286px;height:199px;background:#efefef;border:1px solid #d4d4d4;box-shadow:1px 2px 4px rgba(0,0,0,.35)"></div>
<div class="a" style="left:297px;top:637px;width:284px;height:24px;background:#a6a6a6"></div>
<div class="a" style="left:582px;top:637px;width:284px;height:24px;background:#a6a6a6"></div>
<svg style="left:304px;top:564px" width="15" height="18" viewBox="0 0 15 18"><defs><linearGradient id="pg" x1="0" y1="0" x2="1" y2="1"><stop offset="0" stop-color="#ffffff"/><stop offset="1" stop-color="#dce9f2"/></linearGradient></defs><path d="M0.7 0.6H10.2L14.4 4.8V17.3H0.7Z" fill="url(#pg)" stroke="#6b97ba" stroke-width="1.2" stroke-linejoin="round"/><path d="M0.7 17.1H14.4" stroke="#4f80a8" stroke-width="1.2"/><path d="M10.2 0.6L14.4 4.8" stroke="#4f80a8" stroke-width="1.2"/><circle cx="11.3" cy="3.6" r="1" fill="#e0ecf4"/></svg>
<div class="mi " style="left:325px;top:566.0px">Drukuj</div>
<div class="mi" style="left:573px;top:564.0px;color:#555a70;font-size:11px">›</div>
<svg style="left:304px;top:589px" width="15" height="18" viewBox="0 0 15 18"><defs><linearGradient id="pg" x1="0" y1="0" x2="1" y2="1"><stop offset="0" stop-color="#ffffff"/><stop offset="1" stop-color="#dce9f2"/></linearGradient></defs><path d="M0.7 0.6H10.2L14.4 4.8V17.3H0.7Z" fill="url(#pg)" stroke="#6b97ba" stroke-width="1.2" stroke-linejoin="round"/><path d="M0.7 17.1H14.4" stroke="#4f80a8" stroke-width="1.2"/><path d="M10.2 0.6L14.4 4.8" stroke="#4f80a8" stroke-width="1.2"/><circle cx="11.3" cy="3.6" r="1" fill="#e0ecf4"/></svg>
<div class="mi " style="left:325px;top:591.0px">Panel wydruku</div>
<svg style="left:302px;top:615px" width="18" height="18" viewBox="0 0 18 18"><path d="M0.5 0.5H7L9.5 3V13.5H0.5Z" fill="#fbfbfb" stroke="#b5b5b5"/><path d="M4 3H10.5L13 5.5V16H4Z" fill="#fbfbfb" stroke="#b5b5b5"/><path d="M7.5 5.5H14L17.5 9V17.5H7.5Z" fill="#fdfdfd" stroke="#b0b0b0"/><path d="M14 5.5V9H17.5" fill="#ececec" stroke="#c0c0c0" stroke-width="0.7"/></svg>
<div class="mi " style="left:325px;top:616.0px">Dokumenty powiązane</div>
<svg style="left:304px;top:639px" width="15" height="18" viewBox="0 0 15 18"><defs><linearGradient id="pg" x1="0" y1="0" x2="1" y2="1"><stop offset="0" stop-color="#ffffff"/><stop offset="1" stop-color="#dce9f2"/></linearGradient></defs><path d="M0.7 0.6H10.2L14.4 4.8V17.3H0.7Z" fill="url(#pg)" stroke="#6b97ba" stroke-width="1.2" stroke-linejoin="round"/><path d="M0.7 17.1H14.4" stroke="#4f80a8" stroke-width="1.2"/><path d="M10.2 0.6L14.4 4.8" stroke="#4f80a8" stroke-width="1.2"/><circle cx="11.3" cy="3.6" r="1" fill="#e0ecf4"/></svg>
<div class="mi " style="left:325px;top:640.5px"><b style="font-size:12px">KS<span style="color:#e8141e">e</span>F</b></div>
<div class="mi" style="left:573px;top:638.5px;color:#555a70;font-size:11px">›</div>
<svg style="left:303px;top:666px" width="17" height="18" viewBox="0 0 17 18"><path d="M4.3 7.5V5.3A4.2 4.2 0 0 1 12.7 5.3V7.5" fill="none" stroke="#9c9c9c" stroke-width="2.2"/><defs><linearGradient id="lk" x1="0" y1="0" x2="0" y2="1"><stop offset="0" stop-color="#fbe49a"/><stop offset="1" stop-color="#e8b03a"/></linearGradient></defs><rect x="0.7" y="7.5" width="15.6" height="10" rx="0.8" fill="url(#lk)" stroke="#d08a20" stroke-width="1"/><path d="M2.5 10H6M11 10H14.5M2.5 13H6M11 13H14.5" stroke="#d8a040" stroke-width="0.7"/><rect x="7.6" y="9.8" width="1.8" height="3.8" rx="0.9" fill="#8a5a10"/></svg>
<div class="mi " style="left:325px;top:669.0px">Blokuj</div>
<svg style="left:302px;top:691px" width="18" height="18" viewBox="0 0 18 18"><path d="M9.5 7.5V4.8A3.5 3.5 0 0 1 16.5 4.8V7.5" fill="none" stroke="#9c9c9c" stroke-width="2"/><defs><linearGradient id="ulk" x1="0" y1="0" x2="1" y2="0"><stop offset="0" stop-color="#e8b030"/><stop offset="0.5" stop-color="#f8dc7a"/><stop offset="1" stop-color="#e0a020"/></linearGradient></defs><rect x="0.7" y="7.5" width="11.6" height="10" rx="1" fill="url(#ulk)" stroke="#c88a18" stroke-width="1"/><path d="M5.5 11L4 12.5L5.5 14Z" fill="#8a5a10"/></svg>
<div class="mi dis" style="left:325px;top:693.0px">Odblokuj</div>
<svg style="left:302px;top:717px" width="18" height="18" viewBox="0 0 18 18"><path d="M0.5 0.5H7L9.5 3V13.5H0.5Z" fill="#fbfbfb" stroke="#b5b5b5"/><path d="M4 3H10.5L13 5.5V16H4Z" fill="#fbfbfb" stroke="#b5b5b5"/><path d="M7.5 5.5H14L17.5 9V17.5H7.5Z" fill="#fdfdfd" stroke="#b0b0b0"/><path d="M14 5.5V9H17.5" fill="#ececec" stroke="#c0c0c0" stroke-width="0.7"/></svg>
<div class="mi " style="left:325px;top:717.7px">Zgrupuj</div>
<div class="mi" style="left:573px;top:715.7px;color:#555a70;font-size:11px">›</div>
<svg style="left:302px;top:742px" width="18" height="18" viewBox="0 0 18 18"><path d="M0.5 0.5H7L9.5 3V13.5H0.5Z" fill="#fbfbfb" stroke="#b5b5b5"/><path d="M4 3H10.5L13 5.5V16H4Z" fill="#fbfbfb" stroke="#b5b5b5"/><path d="M7.5 5.5H14L17.5 9V17.5H7.5Z" fill="#fdfdfd" stroke="#b0b0b0"/><path d="M14 5.5V9H17.5" fill="#ececec" stroke="#c0c0c0" stroke-width="0.7"/></svg>
<div class="mi " style="left:325px;top:742.7px">Szybka korekta do zera</div>
<svg style="left:302px;top:770px" width="18" height="19" viewBox="0 0 18 19"><rect x="0.5" y="0.5" width="14" height="9.5" rx="1.8" fill="#eef6fd" stroke="#9cc6ee"/><rect x="2.5" y="3.5" width="14.5" height="10.5" rx="1.8" fill="#d8eefc" stroke="#6fb0e8"/><path d="M6 14L5 16.5L8.5 14" fill="#9cc6ee"/><path d="M5.5 6.5H11M5.5 8.5H11" stroke="#7a9ee0" stroke-width="0.9"/><path d="M10.5 10.5H13V8H15.5V10.5H18V13H15.5V16.5H13V13H10.5Z" transform="translate(-1 0.8)" fill="#4cc040" stroke="#3aa030" stroke-width="0.5"/></svg>
<div class="mi " style="left:325px;top:771.3px">Koryguj</div>
<svg style="left:302px;top:795px" width="18" height="19" viewBox="0 0 18 19"><rect x="0.5" y="0.5" width="14" height="9.5" rx="1.8" fill="#eef6fd" stroke="#9cc6ee"/><rect x="2.5" y="3.5" width="14.5" height="10.5" rx="1.8" fill="#d8eefc" stroke="#6fb0e8"/><path d="M6 14L5 16.5L8.5 14" fill="#9cc6ee"/><path d="M5.5 6.5H11M5.5 8.5H11" stroke="#7a9ee0" stroke-width="0.9"/><path d="M10.5 10.5H13V8H15.5V10.5H18V13H15.5V16.5H13V13H10.5Z" transform="translate(-1 0.8)" fill="#4cc040" stroke="#3aa030" stroke-width="0.5"/></svg>
<div class="mi dis" style="left:325px;top:796.0px">Wystaw fakturę VAT</div>
<svg style="left:302px;top:820px" width="18" height="18" viewBox="0 0 18 18"><circle cx="9" cy="9" r="7.3" fill="#fff" stroke="#d62a2a" stroke-width="2.8"/><path d="M4.2 4.2L13.8 13.8" stroke="#d62a2a" stroke-width="2.8"/></svg>
<div class="mi " style="left:325px;top:821.0px">Anuluj</div>
<svg style="left:302px;top:845px" width="18" height="18" viewBox="0 0 18 18"><rect x="0.5" y="0.5" width="17" height="15" rx="1" fill="#e2e6f6" stroke="#9a9ab0"/><rect x="1" y="1" width="16" height="3.3" fill="#4a6ad0"/><path d="M3.5 17.5L4.5 14L14.5 4.5L17 7L7 16.5Z" fill="#f2b52a" stroke="#c88a10" stroke-width="0.7"/><path d="M14 4.8L16.5 2.8A1.3 1.3 0 0 1 18 4.5L16.5 7Z" fill="#d82a2a"/></svg>
<div class="mi " style="left:325px;top:846.0px">Edytuj</div>
<svg style="left:302px;top:870px" width="18" height="18" viewBox="0 0 18 18"><path d="M2.8 2.8L15.2 15.2M15.2 2.8L2.8 15.2" stroke="#cf3a3a" stroke-width="5" stroke-linecap="round"/><path d="M2.8 2.8L15.2 15.2M15.2 2.8L2.8 15.2" stroke="#e65a5a" stroke-width="2.6" stroke-linecap="round"/></svg>
<div class="mi " style="left:325px;top:870.7px">Usuń</div>
<svg style="left:304px;top:899px" width="17" height="18" viewBox="0 0 17 18"><path d="M2.5 0.5H13L16.5 4V17.5H2.5Z" fill="#2258a8" stroke="#1a4890" stroke-width="0.8"/><rect x="0.5" y="2" width="12" height="10.5" fill="#f6dc3a"/><path d="M6 3V12M8 3V12" stroke="#e0c030" stroke-width="0.6"/></svg>
<div class="mi " style="left:325px;top:899.1px">Dodaj załącznik/notatkę</div>
<svg style="left:302px;top:923px" width="18" height="18" viewBox="0 0 18 18"><g transform="rotate(-42 9 9)"><path d="M0.09999999999999998 4.6H17.9Q19.40 5.70 17.90 6.80Q19.40 7.90 17.90 9.00Q19.40 10.10 17.90 11.20Q19.40 12.30 17.90 13.40H0.09999999999999998Q-1.40 12.30 0.10 11.20Q-1.40 10.10 0.10 9.00Q-1.40 7.90 0.10 6.80Q-1.40 5.70 0.10 4.60Z" fill="#f0d08a" stroke="#c49850" stroke-width="0.9"/><path d="M2 5.8999999999999995H16" stroke="#fae6b4" stroke-width="1"/><text x="9" y="11.6" font-size="8" font-family="Liberation Sans" fill="#6a5030" text-anchor="middle" transform="rotate(90 9 9)">$</text></g></svg>
<div class="mi " style="left:325px;top:923.7px">Posiada koszty</div>
<svg style="left:302px;top:948px" width="18" height="18" viewBox="0 0 18 18"><g transform="rotate(-42 9 9)"><path d="M0.09999999999999998 4.6H17.9Q19.40 5.70 17.90 6.80Q19.40 7.90 17.90 9.00Q19.40 10.10 17.90 11.20Q19.40 12.30 17.90 13.40H0.09999999999999998Q-1.40 12.30 0.10 11.20Q-1.40 10.10 0.10 9.00Q-1.40 7.90 0.10 6.80Q-1.40 5.70 0.10 4.60Z" fill="#f0d08a" stroke="#c49850" stroke-width="0.9"/><path d="M2 5.8999999999999995H16" stroke="#fae6b4" stroke-width="1"/><text x="9" y="11.6" font-size="8" font-family="Liberation Sans" fill="#6a5030" text-anchor="middle" transform="rotate(90 9 9)">$</text></g></svg>
<div class="mi " style="left:325px;top:948.5px">Dodaj jako koszt do kancelarii</div>
<div class="sep" style="left:298px;width:282px;top:767px"></div>
<div class="sep" style="left:298px;width:282px;top:895px"></div>
<svg style="left:586px;top:640px" width="18" height="18" viewBox="0 0 18 18"><defs><radialGradient id="gl" cx="0.4" cy="0.35" r="0.7"><stop offset="0" stop-color="#b8ecfb"/><stop offset="1" stop-color="#3a9ae0"/></radialGradient></defs><circle cx="9" cy="9" r="8.3" fill="url(#gl)" stroke="#5a68c8" stroke-width="0.9"/><path d="M2 6Q4 2 8.5 1.5Q10 3 8 5Q6 7 5 9.5Q3 9 2 6Z" fill="#2ea03a"/><path d="M9.5 1.5Q13 1.6 16 5Q15 6 13.5 5Q12 4 9.5 1.5Z" fill="#2ea03a"/><path d="M4 12Q6 12 7 14Q7.5 16.5 6 16Q4 14.5 4 12Z" fill="#3aa83a"/><path d="M8.5 6.5H13.5V11H17L11 17.5L5 11H8.5Z" fill="#6a88ec" stroke="#3e5cc8" stroke-width="0.8"/></svg>
<div class="mi " style="left:609px;top:641.4px">Wyślij do KSeF</div>
<svg style="left:588px;top:665px" width="15" height="18" viewBox="0 0 15 18"><defs><linearGradient id="pg" x1="0" y1="0" x2="1" y2="1"><stop offset="0" stop-color="#ffffff"/><stop offset="1" stop-color="#dce9f2"/></linearGradient></defs><path d="M0.7 0.6H10.2L14.4 4.8V17.3H0.7Z" fill="url(#pg)" stroke="#6b97ba" stroke-width="1.2" stroke-linejoin="round"/><path d="M0.7 17.1H14.4" stroke="#4f80a8" stroke-width="1.2"/><path d="M10.2 0.6L14.4 4.8" stroke="#4f80a8" stroke-width="1.2"/><circle cx="11.3" cy="3.6" r="1" fill="#e0ecf4"/></svg>
<div class="mi " style="left:609px;top:666.1px">Pokaż podgląd HTML</div>
<svg style="left:588px;top:690px" width="15" height="18" viewBox="0 0 15 18"><defs><linearGradient id="pg" x1="0" y1="0" x2="1" y2="1"><stop offset="0" stop-color="#ffffff"/><stop offset="1" stop-color="#dce9f2"/></linearGradient></defs><path d="M0.7 0.6H10.2L14.4 4.8V17.3H0.7Z" fill="url(#pg)" stroke="#6b97ba" stroke-width="1.2" stroke-linejoin="round"/><path d="M0.7 17.1H14.4" stroke="#4f80a8" stroke-width="1.2"/><path d="M10.2 0.6L14.4 4.8" stroke="#4f80a8" stroke-width="1.2"/><circle cx="11.3" cy="3.6" r="1" fill="#e0ecf4"/></svg>
<div class="mi " style="left:609px;top:691.2px">Wygeneruj PDF</div>
<svg style="left:586px;top:715px" width="18" height="18" viewBox="0 0 18 18"><path d="M0.5 0.5H15.5L17.5 2.5V17.5H0.5Z" fill="#8a86e2" stroke="#5a56b0"/><rect x="4" y="1" width="9" height="5" fill="#d8d6f4"/><rect x="9.5" y="1.8" width="1.8" height="3.5" fill="#4a48a0"/><rect x="3" y="8.5" width="12" height="9" fill="#dcdce6" stroke="#f4f4fa" stroke-width="0.6"/><path d="M4 11H14M4 13H14M4 15H14" stroke="#b8b8c8" stroke-width="0.7"/></svg>
<div class="mi " style="left:609px;top:716.0px">Zapisz plik XML (FA3)</div>
<svg style="left:586px;top:740px" width="18" height="18" viewBox="0 0 18 18"><circle cx="9" cy="9" r="8.3" fill="#f2f2f2" stroke="#8a8a8a" stroke-width="1.1"/><circle cx="9" cy="9" r="6.6" fill="#3f95dc"/><path d="M7.5 7.5H9.9V12.5H10.8V13.6H7.2V12.5H8.1V8.6H7.5Z" fill="#fff"/><circle cx="9" cy="5.3" r="1.1" fill="#fff"/></svg>
<div class="mi " style="left:609px;top:741.1px">Status</div>
<svg style="left:586px;top:765px" width="18" height="18" viewBox="0 0 18 18"><path d="M0.5 0.5H15.5L17.5 2.5V17.5H0.5Z" fill="#8a86e2" stroke="#5a56b0"/><rect x="4" y="1" width="9" height="5" fill="#d8d6f4"/><rect x="9.5" y="1.8" width="1.8" height="3.5" fill="#4a48a0"/><rect x="3" y="8.5" width="12" height="9" fill="#dcdce6" stroke="#f4f4fa" stroke-width="0.6"/><path d="M4 11H14M4 13H14M4 15H14" stroke="#b8b8c8" stroke-width="0.7"/></svg>
<div class="mi dis" style="left:609px;top:765.8px">Pobierz UPO</div>
<svg style="left:586px;top:792px" width="18" height="18" viewBox="0 0 18 18"><defs><radialGradient id="gl" cx="0.4" cy="0.35" r="0.7"><stop offset="0" stop-color="#b8ecfb"/><stop offset="1" stop-color="#3a9ae0"/></radialGradient></defs><circle cx="9" cy="9" r="8.3" fill="url(#gl)" stroke="#5a68c8" stroke-width="0.9"/><path d="M2 6Q4 2 8.5 1.5Q10 3 8 5Q6 7 5 9.5Q3 9 2 6Z" fill="#2ea03a"/><path d="M9.5 1.5Q13 1.6 16 5Q15 6 13.5 5Q12 4 9.5 1.5Z" fill="#2ea03a"/><path d="M4 12Q6 12 7 14Q7.5 16.5 6 16Q4 14.5 4 12Z" fill="#3aa83a"/><path d="M8.5 6.5H13.5V11H17L11 17.5L5 11H8.5Z" fill="#6a88ec" stroke="#3e5cc8" stroke-width="0.8"/></svg>
<div class="mi " style="left:609px;top:793.5px">Wyślij do KSeF wszystkie zaznaczone</div>
<div class="mi" style="left:609px;top:812.5px">dokumenty</div>
<div class="sep" style="left:583px;width:282px;top:790px"></div>
<svg style="left:657px;top:656px" width="22" height="27" viewBox="0 0 20 25"><path d="M5.5 2.2C5.5 0.2 8.5 0.2 8.5 2.2V9.5C8.5 8.3 11.3 8.3 11.3 9.5V10.2C11.3 9 14 9 14 10.2V10.8C14 9.6 16.8 9.6 16.8 10.8V17C16.8 20.5 15 23.6 11.5 23.6H9.5C7.5 23.6 6.3 22.5 5 20.5L1.3 14.5C0.5 13 2.6 11.3 4 12.8L5.5 14.5Z" fill="#fff" stroke="#141a30" stroke-width="1.1" stroke-linejoin="round"/><path d="M8.5 9.5V14M11.3 10.2V14M14 10.8V14" stroke="#141a30" stroke-width="0.9"/></svg>
<div class="red" style="left:296px;top:635px;width:570px;height:29px"></div>
</body></html>
